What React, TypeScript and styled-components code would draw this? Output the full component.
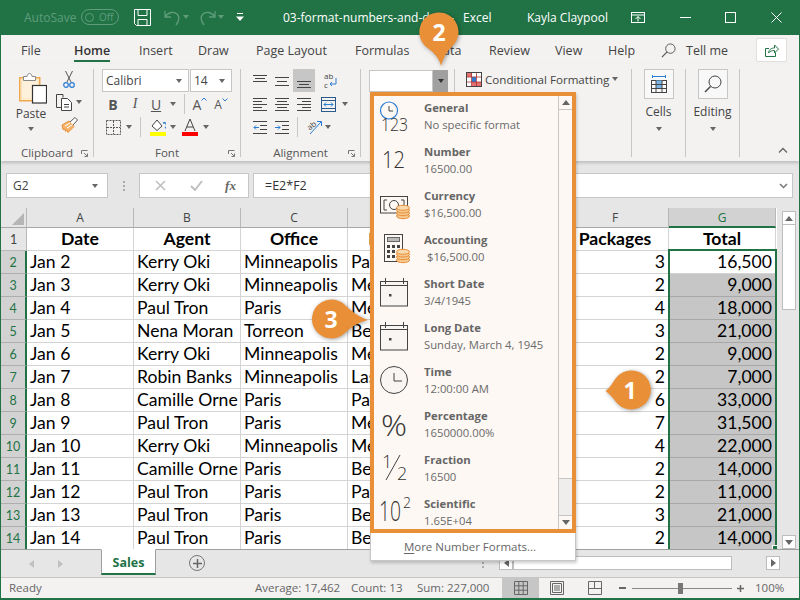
import React from "react";
import styled, { createGlobalStyle } from "styled-components";

const Global = createGlobalStyle`
  html, body { margin: 0; padding: 0; width: 800px; height: 600px; overflow: hidden; background: #e6e6e6; }
  * { box-sizing: border-box; }
`;
const UI = `"Open Sans", "Noto Sans", sans-serif`;
const GREEN = "#217346";
const ORANGE = "#e98f38";

const Frame = styled.div`
  position: relative; width: 800px; height: 600px; overflow: hidden;
  display: flex; flex-direction: column; background: #e6e6e6;
  border-left: 1px solid ${GREEN}; border-right: 1px solid ${GREEN}; border-bottom: 2px solid ${GREEN};
  font-family: ${UI}; color: #444;
  & > * { min-height: 0; }
`;
const Slot = styled.div<{ $w?: number; $ml?: number; $j?: string; $h?: number }>`
  flex: 0 0 ${p => (p.$w !== undefined ? `${p.$w}px` : "auto")};
  margin-left: ${p => p.$ml ?? 0}px;
  ${p => (p.$h ? `height: ${p.$h}px;` : "")}
  display: flex; align-items: center; justify-content: ${p => p.$j ?? "center"};
  white-space: nowrap;
`;
const Caret = styled.span<{ $c?: string }>`
  display: block; width: 0; height: 0;
  border-left: 3.5px solid transparent; border-right: 3.5px solid transparent;
  border-top: 4px solid ${p => p.$c ?? "#666"};
`;
const Sep = styled.div<{ $ml: number }>`
  flex: 0 0 1px; margin-left: ${p => p.$ml}px; height: 20px; background: #c8c6c4;
`;

/* title bar */
const TitleBar = styled.div`
  flex: 0 0 35px; display: flex; align-items: center; background: ${GREEN};
  color: #fff; font-size: 12px; padding-bottom: 1px;
`;
const DimText = styled.span`color: #5f9c7c; font-size: 12px;`;
const Toggle = styled.div`
  width: 38px; height: 16px; border: 1.5px solid #5f9c7c; border-radius: 8px;
  display: flex; align-items: center; gap: 5px; padding-left: 3px; color: #5f9c7c; font-size: 10px;
`;
const Knob = styled.span`width: 9px; height: 9px; border-radius: 50%; border: 1.5px solid #5f9c7c;`;

/* tabs */
const TabRow = styled.div`
  flex: 0 0 29px; display: flex; align-items: flex-start; background: #f3f2f1; padding-top: 5px; font-size: 12.5px; color: #444;
`;
const TabLabel = styled.span<{ $active?: boolean }>`
  display: block; height: 22px; line-height: 21px;
  color: ${p => (p.$active ? "#333" : "#444")};
  font-weight: ${p => (p.$active ? 600 : 400)};
  border-bottom: ${p => (p.$active ? `2px solid ${GREEN}` : "none")};
`;
const ShareBtn = styled.div`
  flex: 0 0 31px; height: 24px; margin-top: -2px; background: #fff; border: 1px solid #e1dfdd; border-radius: 2px;
  display: flex; align-items: center; justify-content: center;
`;

/* ribbon */
const Ribbon = styled.div`
  flex: 0 0 97px; display: flex; align-items: flex-start; background: #f3f2f1; font-size: 11.6px;
  box-shadow: 0 2px 3px rgba(0,0,0,.18); position: relative; z-index: 1;
`;
const Group = styled.div<{ $w: number }>`
  flex: 0 0 ${p => p.$w}px; height: 88px; margin-top: 5px; border-right: 1px solid #c8c6c4;
  display: flex; flex-direction: column;
`;
const GroupBody = styled.div`flex: 1; display: flex; flex-direction: column; min-height: 0;`;
const GroupColumns = styled.div`flex: 1; display: flex; min-height: 0;`;
const GroupLabel = styled.div`
  flex: 0 0 10px; min-height: 0; height: 10px; position: relative; text-align: center; font-size: 11.5px; line-height: 12px; color: #555;
`;
const Launcher = styled.svg`position: absolute; right: 5px; top: 3px;`;
const Row = styled.div<{ $h?: number; $mt?: number }>`
  display: flex; align-items: center; height: ${p => p.$h ?? 20}px; margin-top: ${p => p.$mt ?? 0}px;
`;
const Stack = styled.div<{ $w: number; $ml?: number }>`
  flex: 0 0 ${p => p.$w}px; margin-left: ${p => p.$ml ?? 0}px;
  display: flex; flex-direction: column; align-items: center;
`;
const Combo = styled.div<{ $w: number; $ml?: number }>`
  flex: 0 0 ${p => p.$w}px; margin-left: ${p => p.$ml ?? 0}px; height: 23px; background: #fff; border: 1px solid #c8c6c4;
  display: flex; align-items: center; justify-content: space-between; padding: 0 6px 0 3px;
  font-size: 12px; color: #444;
`;
const FontLetter = styled.span<{ $i?: boolean; $u?: boolean; $b?: boolean; $s?: number }>`
  font-size: ${p => p.$s ?? 14}px; color: #555;
  font-family: ${p => (p.$i ? `"Liberation Serif", serif` : UI)};
  font-weight: ${p => (p.$b ? 700 : 400)}; font-style: ${p => (p.$i ? "italic" : "normal")};
  text-decoration: ${p => (p.$u ? "underline" : "none")};
`;
const Superscript = styled.svg`margin-bottom: 8px;`;
const Highlight = styled.div`
  flex: 0 0 22px; margin-left: 4px; height: 23px; background: #c6c6c6;
  display: flex; align-items: center; justify-content: center;
`;
const NumberBox = styled.div`
  flex: 0 0 64px; margin-left: 8px; height: 22px; background: #fff; border: 1px solid #c8c6c4;
`;
const NumberDrop = styled.div`
  flex: 0 0 15px; height: 22px; background: #a0a0a0; display: flex; align-items: center; justify-content: center;
`;
const BigBtn = styled.div`
  width: 30px; height: 30px; background: #f8f8f8; border: 1px solid #c8c6c4;
  display: flex; align-items: center; justify-content: center;
`;
const BigLabel = styled.div`margin: 5px 0 8px; font-size: 12px; line-height: 15px; color: #444;`;
const PasteLabel = styled(BigLabel)`margin: 2px 0 6px;`;
const PasteIcon = styled.svg`margin: 3px 0 0 3px;`;
const CollapseBox = styled.div`flex: 1; height: 92px; display: flex; align-items: flex-end; justify-content: flex-end; padding: 0 11px 3px 0;`;

/* formula bar */
const FormulaZone = styled.div`
  flex: 0 0 47px; display: flex; align-items: flex-start; padding: 12px 6px 0 5px; background: #e6e6e6;
`;
const NameBox = styled.div`
  flex: 0 0 102px; height: 25px; background: #fff; border: 1px solid #c6c6c6;
  display: flex; align-items: center; justify-content: space-between; padding: 0 9px 0 6px; font-size: 12px; color: #444;
`;
const Dots = styled.div`
  flex: 0 0 31px; height: 25px; display: flex; flex-direction: column; align-items: center; justify-content: center; gap: 2px;
  & > i { display: block; width: 2px; height: 2px; background: #aaa; }
`;
const FxBox = styled.div`
  flex: 0 0 110px; height: 25px; background: #fff; border: 1px solid #c6c6c6; display: flex; align-items: center;
`;
const FxLabel = styled.span`font-family: "Liberation Serif", serif; font-style: italic; font-size: 13px; color: #666; font-weight: 700;`;
const FormulaInput = styled.div`
  flex: 1; margin-left: 4px; height: 25px; background: #fff; border: 1px solid #c6c6c6;
  display: flex; align-items: center; justify-content: space-between; padding: 0 4px 0 11px; font-size: 12.5px; color: #333;
`;

/* sheet */
const SheetArea = styled.div`flex: 0 0 341px; display: flex; align-items: stretch; background: #e6e6e6; min-height: 0;`;
const SheetClip = styled.div`position: relative; flex: 0 0 776px; overflow: hidden; background: #fff; min-height: 0;`;
const Grid = styled.div`
  display: grid; grid-template-columns: 26px repeat(7, 107px); grid-template-rows: 20px repeat(14, 23px);
`;
const Corner = styled.div`
  background: #e6e6e6; border-right: 1px solid #b8b8b8; border-bottom: 1px solid #a8a8a8; position: relative;
  &::after { content: ""; position: absolute; right: 2px; bottom: 2px; border-style: solid; border-width: 0 0 12px 12px; border-color: transparent transparent #b5b5b5 transparent; }
`;
const ColHead = styled.div<{ $sel?: boolean }>`
  background: ${p => (p.$sel ? "#d2d2d2" : "#e6e6e6")};
  border-right: 1px solid #b8b8b8;
  border-bottom: ${p => (p.$sel ? `2px solid ${GREEN}` : "1px solid #a8a8a8")};
  display: flex; align-items: center; justify-content: center; font-size: 12px;
  color: ${p => (p.$sel ? GREEN : "#444")};
`;
const RowHead = styled.div<{ $sel?: boolean }>`
  background: ${p => (p.$sel ? "#d2d2d2" : "#e6e6e6")};
  border-bottom: 1px solid ${p => (p.$sel ? "#aeaeae" : "#b8b8b8")};
  border-right: ${p => (p.$sel ? `2px solid ${GREEN}` : "1px solid #b8b8b8")};
  display: flex; align-items: center; justify-content: center; padding-top: 1px;
  font-family: Lato, sans-serif; font-size: 12.5px; color: ${p => (p.$sel ? GREEN : "#444")};
`;
const Cell = styled.div<{ $a?: string; $b?: boolean; $sel?: boolean }>`
  background: ${p => (p.$sel ? "#c6c6c6" : "#fff")};
  border-right: 1px solid ${p => (p.$sel ? "#a8a8a8" : "#d4d4d4")};
  border-bottom: 1px solid ${p => (p.$sel ? "#a8a8a8" : "#d4d4d4")};
  font-family: Lato, Carlito, sans-serif; font-size: 17.6px; line-height: 22px; color: #000;
  font-weight: ${p => (p.$b ? 700 : 400)};
  text-align: ${p => p.$a ?? "left"};
  padding: 0 3px; overflow: hidden; white-space: nowrap;
`;
const Selection = styled.div`
  position: absolute; left: 667px; top: 41px; width: 109px; height: 310px; border: 2px solid ${GREEN}; pointer-events: none;
`;
const FillHandle = styled.div`
  position: absolute; left: 771px; top: 337px; width: 6px; height: 6px; background: ${GREEN}; border: 1px solid #fff;
`;
const VScroll = styled.div`
  flex: 1; display: flex; flex-direction: column; padding: 3px 3px 0 5px; min-height: 0;
`;
const ScrollBtn = styled.div<{ $w?: number; $h?: number; $ml?: number; $mt?: number }>`
  flex: 0 0 auto; width: ${p => p.$w ?? 14}px; height: ${p => p.$h ?? 14}px; margin-left: ${p => p.$ml ?? 0}px;
  margin-top: ${p => p.$mt ?? 0}px;
  background: #fff; border: 1px solid #bdbdbd;
  display: flex; align-items: center; justify-content: center;
`;
const VThumb = styled.div`flex: 0 0 85px; background: #fff; border: 1px solid #bdbdbd; border-top: 0;`;
const VTrack = styled.div`flex: 1;`;
const CaretUp = styled.span`
  display: block; width: 0; height: 0; border-left: 4px solid transparent; border-right: 4px solid transparent; border-bottom: 5px solid #666;
`;
const CaretDown = styled.span`
  display: block; width: 0; height: 0; border-left: 4px solid transparent; border-right: 4px solid transparent; border-top: 5px solid #666;
`;
const CaretSide = styled.span<{ $left?: boolean; $c?: string }>`
  display: block; width: 0; height: 0; border-top: 4px solid transparent; border-bottom: 4px solid transparent;
  ${p => (p.$left ? `border-right: 5px solid ${p.$c ?? "#666"};` : `border-left: 5px solid ${p.$c ?? "#666"};`)}
`;

/* sheet tabs */
const SheetBar = styled.div`
  flex: 0 0 29px; display: flex; align-items: flex-start; background: #e6e6e6; border-bottom: 1px solid #c8c6c4; border-top: 1px solid #9f9f9f;
`;
const SheetTab = styled.div`
  flex: 0 0 55px; height: 26px; margin-top: -1px; margin-left: 36px; padding-top: 2px; background: #fff; border: 1px solid #9f9f9f; border-top: 1px solid #fff;
  border-bottom: 2px solid ${GREEN}; color: ${GREEN}; font-weight: 700; font-size: 12.5px;
  display: flex; align-items: center; justify-content: center;
`;
const AddSheet = styled.div`
  flex: 0 0 16px; height: 16px; margin: 5px 0 0 33px; border-radius: 50%; border: 1.5px solid #777;
  display: flex; align-items: center; justify-content: center;
`;
const SplitDots = styled(Dots)`flex: 0 0 4px; height: 14px; margin: 6px 0 0 276px;`;
const HThumb = styled.div`flex: 0 0 219px; height: 14px; margin-top: 6px; background: #fff; border: 1px solid #bdbdbd;`;

/* status bar */
const StatusBar = styled.div`
  flex: 1; display: flex; align-items: center; background: #f3f2f1; font-size: 11.5px; color: #666;
`;
const StatusText = styled(Slot)`padding-bottom: 2px;`;
const ActiveView = styled.div`
  flex: 0 0 37px; height: 20px; background: #c6c6c6; display: flex; align-items: center; justify-content: center;
`;
const ZoomTrack = styled.div`
  flex: 0 0 100px; margin-left: 6px; height: 1px; background: #888; position: relative;
`;
const ZoomThumb = styled.div`
  position: absolute; left: 46px; top: -5px; width: 5px; height: 11px; background: #777;
`;

/* number format menu */
const Menu = styled.div`
  position: absolute; left: 369px; top: 92px; width: 206px; z-index: 3;
  box-shadow: 1px 2px 3px rgba(0,0,0,.2);
`;
const MenuBody = styled.div`
  height: 441px; border: 4px solid ${ORANGE}; background: #fdf8f4; display: flex;
`;
const MenuList = styled.div`flex: 1; min-width: 0;`;
const MenuItem = styled.div`flex: none; height: 44px; display: flex;`;
const MenuIcon = styled.svg`flex: 0 0 50px; width: 50px; height: 44px;`;
const MenuText = styled.div`padding-top: 3px; font-size: 11.3px; line-height: 17px; color: #6a6a6a; white-space: pre;`;
const MenuTitle = styled.div`font-weight: 700; color: #666;`;
const MenuScroll = styled.div`flex: 0 0 14px; display: flex; flex-direction: column; border-left: 1px solid #c8c6c4;`;
const MenuBtn = styled.div`
  flex: 0 0 14px; background: #fdf8f4; display: flex; align-items: center; justify-content: center;
  border-bottom: 1px solid #c8c6c4;
`;
const MenuBtnEnd = styled(MenuBtn)`border-bottom: 0; border-top: 1px solid #c8c6c4;`;
const MenuThumb = styled.div`flex: 0 0 369px; border-bottom: 1px solid #c8c6c4;`;
const MenuTrack = styled.div`flex: 1; background: #f0eeec;`;
const MoreRow = styled.div`
  height: 28px; background: #fff; border: 1px solid #c8c6c4; border-top: 0; display: flex; align-items: center;
  justify-content: center; padding-right: 6px; font-size: 11.5px; color: #666;
  & u { text-underline-offset: 2px; }
`;

/* callouts */
const Callout = styled.div<{ $x: number; $y: number; $w: number; $h: number }>`
  position: absolute; left: ${p => p.$x}px; top: ${p => p.$y}px; width: ${p => p.$w}px; height: ${p => p.$h}px; z-index: 4;
`;
const CalloutShape = styled.svg`display: block; overflow: visible; filter: drop-shadow(1px 1px 2px rgba(0,0,0,.35));`;
const CalloutNum = styled.span<{ $left: number }>`
  position: absolute; left: ${p => p.$left}px; top: 0; width: 40px; height: 40px; display: flex; align-items: center; justify-content: center;
  color: #fff; font: 700 23px/1 ${UI};
`;

/* drawings */
const Lines: React.FC<{ w: number; rows: [number, number, number][]; c?: string }> = ({ w, rows, c = "#444" }) => (
  <svg width={w} height={16} viewBox={`0 0 ${w} 16`}>
    {rows.map(([x1, x2, y], i) => <path key={i} d={`M${x1} ${y + .5}H${x2}`} stroke={c} fill="none" />)}
  </svg>
);
const alignTop: [number, number, number][] = [[0, 14, 2], [2, 12, 5], [0, 14, 8]];
const alignMid: [number, number, number][] = [[0, 14, 4], [2, 12, 8], [0, 14, 12]];
const alignBot: [number, number, number][] = [[0, 14, 8], [2, 12, 11], [0, 14, 14]];
const left: [number, number, number][] = [[0, 14, 2], [0, 9, 5], [0, 14, 8], [0, 9, 11], [0, 14, 14]];
const center: [number, number, number][] = [[0, 14, 2], [2, 12, 5], [0, 14, 8], [2, 12, 11], [0, 14, 14]];
const right: [number, number, number][] = [[0, 14, 2], [5, 14, 5], [0, 14, 8], [5, 14, 11], [0, 14, 14]];

const Launch = () => (
  <Launcher width="7" height="7" viewBox="0 0 7 7">
    <path d="M.5 4V.5H6.500M3 3l3 3M6.500 3.500V6.500H3.500" stroke="#777" fill="none" />
  </Launcher>
);
const Coins: React.FC<{ x: number; y: number }> = ({ x, y }) => (
  <g transform={`translate(${x} ${y})`} fill="#f5c88f" stroke="#e98f38">
    <ellipse cx="7" cy="11" rx="6.500" ry="2.700" />
    <ellipse cx="7" cy="8" rx="6.500" ry="2.700" />
    <ellipse cx="7" cy="5.300" rx="6.500" ry="2.700" />
    <ellipse cx="7" cy="2.800" rx="6.500" ry="2.500" fill="#f9d9ae" />
  </g>
);
const Calendar = () => (
  <g fill="none" stroke="#444">
    <rect x="6.500" y="9.500" width="27" height="24.500" fill="#f8f5f2" />
    <path d="M6.500 13.500H33.500M11.500 6v6M29.500 6v6" />
    <rect x="15.500" y="22.500" width="1.500" height="1.500" fill="#444" />
  </g>
);
const iconText = { fontFamily: `"Open Sans", sans-serif`, fontWeight: 300, fill: "#333", lengthAdjust: "spacingAndGlyphs" } as const;

const icons: React.ReactNode[] = [
  <>
    <circle cx="15" cy="14.500" r="8.500" fill="none" stroke="#2b7cd3" strokeWidth="1.200" />
    <path d="M15 10v5h4" fill="none" stroke="#444" />
    <text x="7" y="34.500" fontSize="18" textLength="27" {...iconText}>123</text>
  </>,
  <text x="8" y="28" fontSize="24" textLength="23" {...iconText}>12</text>,
  <>
    <rect x="6.500" y="12.500" width="27" height="16.500" fill="none" stroke="#444" />
    <path d="M13 16h-3v10h3M27 16h3v10h-3" fill="none" stroke="#444" />
    <circle cx="20" cy="21" r="4.500" fill="none" stroke="#444" />
    <Coins x={22} y={21} />
  </>,
  <>
    <rect x="10.500" y="6.500" width="18" height="27" fill="none" stroke="#444" />
    <rect x="13.500" y="9.500" width="12" height="4" fill="#bbb" stroke="#666" />
    <path d="M13 17h3v3h-3zM18 17h3v3h-3zM23 17h3v3h-3zM13 22h3v3h-3zM18 22h3v3h-3zM13 27h3v3h-3zM18 27h3v3h-3z" fill="#444" />
    <Coins x={22} y={21} />
  </>,
  <Calendar />,
  <Calendar />,
  <>
    <circle cx="20" cy="20" r="13.500" fill="#f8f5f2" stroke="#444" />
    <path d="M20 13v8h8" fill="none" stroke="#444" />
  </>,
  <text x="7" y="32" fontSize="30" textLength="26" {...iconText}>%</text>,
  <>
    <text x="8" y="20" fontSize="18" {...iconText}>1</text>
    <path d="M12 32 L26 7" stroke="#444" fill="none" />
    <text x="23" y="32" fontSize="18" {...iconText}>2</text>
  </>,
  <>
    <text x="5" y="29" fontSize="27" textLength="22" {...iconText}>10</text>
    <text x="29" y="16" fontSize="14" {...iconText}>2</text>
  </>,
];

const menuItems: [string, string][] = [
  ["General", "No specific format"],
  ["Number", "16500.00"],
  ["Currency", "$16,500.00"],
  ["Accounting", " $16,500.00"],
  ["Short Date", "3/4/1945"],
  ["Long Date", "Sunday, March 4, 1945"],
  ["Time", "12:00:00 AM"],
  ["Percentage", "1650000.00%"],
  ["Fraction", "16500"],
  ["Scientific", "1.65E+04"],
];

const heads = ["A", "B", "C", "D", "E", "F", "G"];
const titles = ["Date", "Agent", "Office", "Expense", "", "Packages", "Total"];
const data: [string, string, string, string, string, string][] = [
  ["Jan 2", "Kerry Oki", "Minneapolis", "Pa", "3", "16,500"],
  ["Jan 3", "Kerry Oki", "Minneapolis", "Me", "2", "9,000"],
  ["Jan 4", "Paul Tron", "Paris", "Me", "4", "18,000"],
  ["Jan 5", "Nena Moran", "Torreon", "Be", "3", "21,000"],
  ["Jan 6", "Kerry Oki", "Minneapolis", "Me", "2", "9,000"],
  ["Jan 7", "Robin Banks", "Minneapolis", "Las", "2", "7,000"],
  ["Jan 8", "Camille Orne", "Paris", "Pa", "6", "33,000"],
  ["Jan 9", "Paul Tron", "Paris", "Me", "7", "31,500"],
  ["Jan 10", "Kerry Oki", "Minneapolis", "Me", "4", "22,000"],
  ["Jan 11", "Camille Orne", "Paris", "Be", "2", "14,000"],
  ["Jan 12", "Paul Tron", "Paris", "Pa", "2", "11,000"],
  ["Jan 13", "Paul Tron", "Paris", "Be", "3", "21,000"],
  ["Jan 14", "Paul Tron", "Paris", "Be", "2", "14,000"],
];

export default function App() {
  return (
    <Frame>
      <Global />
      <TitleBar>
        <Slot $w={57} $ml={23} $j="flex-start"><DimText>AutoSave</DimText></Slot>
        <Slot $w={38}><Toggle><Knob />Off</Toggle></Slot>
        <Slot $w={17} $ml={15}>
          <svg width="17" height="17" viewBox="0 0 17 17" fill="none" stroke="#fff">
            <path d="M.5.500H16.500V16.500H2.500L.5 14.500Z" /><path d="M4 .5V6.500H13V.5M4 16.500V10.500H13V16.500" />
          </svg>
        </Slot>
        <Slot $w={17} $ml={13}>
          <svg width="17" height="17" viewBox="0 0 17 17" fill="none" stroke="#5f9c7c" strokeWidth="1.300">
            <path d="M1 2v6h6M1 8C4 3 10 2 13 5c3 3 2 7-1 11" />
          </svg>
        </Slot>
        <Slot $w={10}><Caret $c="#5f9c7c" /></Slot>
        <Slot $w={17} $ml={8}>
          <svg width="17" height="17" viewBox="0 0 17 17" fill="none" stroke="#5f9c7c" strokeWidth="1.300">
            <path d="M16 2v6h-6M16 8C13 3 7 2 4 5c-3 3-2 7 1 11" />
          </svg>
        </Slot>
        <Slot $w={10}><Caret $c="#5f9c7c" /></Slot>
        <Slot $w={12} $ml={8}>
          <svg width="8" height="9" viewBox="0 0 8 9"><path d="M1 .5H7" stroke="#fff" /><path d="M0 3.500H8L4 8Z" fill="#fff" /></svg>
        </Slot>
        <Slot $w={180} $ml={37} $j="flex-start">03-format-numbers-and-data -</Slot>
        <Slot $w={64} $j="flex-start">Excel</Slot>
        <Slot $w={104} $j="flex-start">Kayla Claypool</Slot>
        <Slot $w={14}>
          <svg width="14" height="11" viewBox="0 0 14 11" fill="none" stroke="#fff">
            <rect x=".5" y=".5" width="13" height="10" /><path d="M.5 3H13.500M7 9.500V4.500M4.500 7L7 4.500L9.500 7" />
          </svg>
        </Slot>
        <Slot $w={12} $ml={34}><svg width="11" height="1"><path d="M0 .5H11" stroke="#fff" /></svg></Slot>
        <Slot $w={12} $ml={33}><svg width="11" height="11" fill="none" stroke="#fff"><rect x=".5" y=".5" width="10" height="10" /></svg></Slot>
        <Slot $w={12} $ml={34}><svg width="11" height="11" fill="none" stroke="#fff"><path d="M.5.500L10.500 10.500M10.500.5L.5 10.500" /></svg></Slot>
      </TitleBar>

      <TabRow>
        <Slot $w={53} $ml={20} $j="flex-start"><TabLabel>File</TabLabel></Slot>
        <Slot $w={65} $j="flex-start"><TabLabel $active>Home</TabLabel></Slot>
        <Slot $w={59} $j="flex-start"><TabLabel>Insert</TabLabel></Slot>
        <Slot $w={58} $j="flex-start"><TabLabel>Draw</TabLabel></Slot>
        <Slot $w={99} $j="flex-start"><TabLabel>Page Layout</TabLabel></Slot>
        <Slot $w={79} $j="flex-start"><TabLabel>Formulas</TabLabel></Slot>
        <Slot $w={55} $j="flex-start"><TabLabel>Data</TabLabel></Slot>
        <Slot $w={66} $j="flex-start"><TabLabel>Review</TabLabel></Slot>
        <Slot $w={53} $j="flex-start"><TabLabel>View</TabLabel></Slot>
        <Slot $w={53} $j="flex-start"><TabLabel>Help</TabLabel></Slot>
        <Slot $w={25} $j="flex-start" $h={20}>
          <svg width="15" height="15" viewBox="0 0 16 16" fill="none" stroke="#555">
            <circle cx="10" cy="6" r="5" /><path d="M6.500 9.500L1 15" strokeWidth="1.300" />
          </svg>
        </Slot>
        <Slot $w={70} $j="flex-start"><TabLabel>Tell me</TabLabel></Slot>
        <ShareBtn>
          <svg width="14" height="14" viewBox="0 0 14 14" fill="none" stroke={GREEN}>
            <path d="M4 5.500H.5V13.500H10.500V9.500" /><path d="M3.500 10C4 6 7 5 9.500 5V2L13.500 6L9.500 10V7.500C7 7.500 5 8 3.500 10Z" />
          </svg>
        </ShareBtn>
      </TabRow>

      <Ribbon>
        <Group $w={93}>
          <GroupColumns>
            <Stack $w={38} $ml={11}>
              <PasteIcon width="28" height="32" viewBox="0 0 28 32">
                <rect x=".75" y="5.750" width="20" height="23" fill="#fff8e8" stroke="#f0a84f" strokeWidth="1.500" />
                <rect x="2.500" y="7.500" width="16.500" height="19.500" fill="#fdf1dc" stroke="#fde2b5" />
                <path d="M4.500 8.500V4.500H8C8.500 .5 12.500 .5 13 4.500H16.500V8.500Z" fill="#fff" stroke="#888" />
                <rect x="13.500" y="13.500" width="14" height="17.500" fill="#fff" stroke="#333" strokeWidth="1.200" />
              </PasteIcon>
              <PasteLabel>Paste</PasteLabel>
              <Caret />
            </Stack>
            <Stack $w={30} $ml={4}>
              <Slot $w={20} $h={21}>
                <svg width="12" height="17" viewBox="0 0 12 17" fill="none">
                  <path d="M2.500 0L8 11M9.500 0L4 11" stroke="#555" /><circle cx="3" cy="14" r="2.300" stroke="#2b7cd3" strokeWidth="1.200" /><circle cx="9" cy="14" r="2.300" stroke="#2b7cd3" strokeWidth="1.200" />
                </svg>
              </Slot>
              <Row $h={26}>
                <Slot $w={18}>
                  <svg width="16" height="17" viewBox="0 0 16 17" fill="none" stroke="#444">
                    <path d="M7 3.500V.5H.5V13.500H5" /><path d="M5.500 4.500H11.500L15.500 8.500V16.500H5.500Z" fill="#fff" /><path d="M8 10.500H13M8 13H13" />
                  </svg>
                </Slot>
                <Slot $w={8} $ml={2}><Caret /></Slot>
              </Row>
              <Slot $w={20} $h={20}>
                <svg width="17" height="16" viewBox="0 0 17 16">
                  <path d="M1 8L8 4L13 9.500L7 15.500L6 13L4.500 14.500L4 12L2 12.500Z" fill="#f5b46e" stroke="#e98f38" />
                  <path d="M4 9L9 6M6 11L11 8" stroke="#fff" fill="none" />
                  <path d="M9 5L14 .5L16.500 3L12 8" fill="#fff" stroke="#555" />
                </svg>
              </Slot>
            </Stack>
          </GroupColumns>
          <GroupLabel>Clipboard<Launch /></GroupLabel>
        </Group>

        <Group $w={147}>
          <GroupBody>
            <Row $h={23}>
              <Combo $w={87} $ml={8}>Calibri<Caret /></Combo>
              <Combo $w={42} $ml={1}>14<Caret /></Combo>
            </Row>
            <Row $mt={2}>
              <Slot $w={16} $ml={11}><FontLetter $b>B</FontLetter></Slot>
              <Slot $w={16} $ml={6}><FontLetter $i>I</FontLetter></Slot>
              <Slot $w={16} $ml={5}><FontLetter $u>U</FontLetter></Slot>
              <Slot $w={8} $ml={5}><Caret /></Slot>
              <Sep $ml={7} />
              <Slot $w={18} $ml={6}>
                <FontLetter>A</FontLetter>
                <Superscript width="6" height="6"><path d="M.5 3.500L3 1L5.500 3.500" fill="none" stroke="#2b7cd3" /></Superscript>
              </Slot>
              <Slot $w={18} $ml={3}>
                <FontLetter $s={12}>A</FontLetter>
                <Superscript width="6" height="6"><path d="M.5 1.500L3 4L5.500 1.500" fill="none" stroke="#2b7cd3" /></Superscript>
              </Slot>
            </Row>
            <Row $mt={3}>
              <Slot $w={16} $ml={11}>
                <svg width="15" height="15" fill="none" stroke="#555" strokeDasharray="2 1"><rect x=".5" y=".5" width="14" height="14" /><path d="M7.500 1V14M1 7.500H14" /></svg>
              </Slot>
              <Slot $w={8} $ml={4}><Caret /></Slot>
              <Sep $ml={7} />
              <Slot $w={16} $ml={9}>
                <svg width="16" height="18" viewBox="0 0 16 18">
                  <path d="M2 8L7 2L12 8L7 12.500Z" fill="#fff" stroke="#444" /><path d="M13 5a2 2 0 0 1 2 5" fill="none" stroke="#2b7cd3" strokeWidth="1.500" />
                  <rect x="0" y="14" width="16" height="4" fill="#ffff00" />
                </svg>
              </Slot>
              <Slot $w={8} $ml={3}><Caret /></Slot>
              <Slot $w={16} $ml={5}>
                <svg width="16" height="18" viewBox="0 0 16 18">
                  <path d="M3 13L8 1L13 13M5 9H11" fill="none" stroke="#444" />
                  <rect x="0" y="14" width="16" height="4" fill="#ff0000" />
                </svg>
              </Slot>
              <Slot $w={8} $ml={4}><Caret /></Slot>
            </Row>
          </GroupBody>
          <GroupLabel>Font<Launch /></GroupLabel>
        </Group>

        <Group $w={120}>
          <GroupBody>
            <Row $h={23}>
              <Slot $w={14} $ml={12}><Lines w={14} rows={alignTop} /></Slot>
              <Slot $w={14} $ml={8}><Lines w={14} rows={alignMid} /></Slot>
              <Highlight><Lines w={14} rows={alignBot} /></Highlight>
              <Slot $w={14} $ml={8}>
                <svg width="15" height="18" viewBox="0 0 15 18">
                  <text x="1" y="7" fontSize="8" fill="#444" fontFamily="Open Sans">ab</text>
                  <text x="1" y="16" fontSize="8" fill="#444" fontFamily="Open Sans">c</text>
                  <path d="M13 6V12H7M9 10L7 12L9 14" fill="none" stroke="#2b7cd3" />
                </svg>
              </Slot>
            </Row>
            <Row $mt={2}>
              <Slot $w={14} $ml={12}><Lines w={14} rows={left} /></Slot>
              <Slot $w={14} $ml={8}><Lines w={14} rows={center} /></Slot>
              <Slot $w={14} $ml={8}><Lines w={14} rows={right} /></Slot>
              <Slot $w={15} $ml={10}>
                <svg width="15" height="15" viewBox="0 0 15 15" fill="none">
                  <rect x=".5" y=".5" width="14" height="14" stroke="#2b5a8c" />
                  <path d="M.5 3.500H14.500M.5 11.500H14.500" stroke="#2b5a8c" />
                  <path d="M3 7.500H12M5 5.500L3 7.500L5 9.500M10 5.500L12 7.500L10 9.500" stroke="#2b7cd3" />
                </svg>
              </Slot>
              <Slot $w={8} $ml={5}><Caret /></Slot>
            </Row>
            <Row $mt={3}>
              <Slot $w={14} $ml={12}>
                <svg width="14" height="16" viewBox="0 0 14 16" fill="none">
                  <path d="M0 2.500H14M7 6.500H14M7 10.500H14M0 14.500H14" stroke="#444" /><path d="M6 8.500H1M3 6.500L1 8.500L3 10.500" stroke="#2b7cd3" />
                </svg>
              </Slot>
              <Slot $w={14} $ml={8}>
                <svg width="14" height="16" viewBox="0 0 14 16" fill="none">
                  <path d="M0 2.500H14M7 6.500H14M7 10.500H14M0 14.500H14" stroke="#444" /><path d="M0 8.500H5M3 6.500L5 8.500L3 10.500" stroke="#2b7cd3" />
                </svg>
              </Slot>
              <Sep $ml={8} />
              <Slot $w={17} $ml={7}>
                <svg width="18" height="18" viewBox="0 0 18 18">
                  <text x="2" y="11" fontSize="8" fill="#444" fontFamily="Open Sans" transform="rotate(-40 6 8)">ab</text>
                  <path d="M5 16L16 4M12 3.500H16.500V8" fill="none" stroke="#2b7cd3" />
                </svg>
              </Slot>
              <Slot $w={8} $ml={1}><Caret /></Slot>
            </Row>
          </GroupBody>
          <GroupLabel>Alignment<Launch /></GroupLabel>
        </Group>

        <Group $w={94}>
          <Row $h={23}>
            <NumberBox />
            <NumberDrop><Caret $c="#333" /></NumberDrop>
          </Row>
        </Group>

        <Group $w={177}>
          <Row $h={20}>
            <Slot $w={16} $ml={11}>
              <svg width="16" height="15" viewBox="0 0 16 15" fill="none">
                <rect x=".5" y=".5" width="15" height="14" fill="#fff" stroke="#444" />
                <rect x="1" y="1" width="5" height="4" fill="#e46f6f" /><rect x="6" y="5" width="4" height="5" fill="#2b7cd3" /><rect x="6" y="10" width="9" height="4" fill="#e46f6f" />
                <path d="M5.500 1V14M10.500 1V14M1 5H15M1 10H15" stroke="#a33" strokeWidth=".8" />
              </svg>
            </Slot>
            <Slot $ml={3}>Conditional Formatting</Slot>
            <Slot $w={7} $ml={2}><Caret /></Slot>
          </Row>
        </Group>

        <Group $w={54}>
          <Stack $w={53}>
            <BigBtn>
              <svg width="18" height="18" viewBox="0 0 18 18" fill="none">
                <path d="M2.500 1.500H15.500M2.500 0V3M15.500 0V3" stroke="#2b7cd3" />
                <rect x="1.500" y="5.500" width="15" height="12" stroke="#444" />
                <rect x="6" y="5.500" width="6" height="8" fill="#7cb5e8" />
                <path d="M6 6V17M12 6V17M2 9.500H16M2 13.500H16" stroke="#444" />
              </svg>
            </BigBtn>
            <BigLabel>Cells</BigLabel>
            <Caret />
          </Stack>
        </Group>

        <Group $w={54}>
          <Stack $w={53}>
            <BigBtn>
              <svg width="18" height="18" viewBox="0 0 18 18" fill="none" stroke="#444">
                <circle cx="11" cy="7" r="6" /><path d="M6.500 11.500L1 17" strokeWidth="1.400" />
              </svg>
            </BigBtn>
            <BigLabel>Editing</BigLabel>
            <Caret />
          </Stack>
        </Group>

        <CollapseBox>
          <svg width="10" height="6" fill="none" stroke="#666" strokeWidth="1.300"><path d="M1 5.500L5 1.500L9 5.500" /></svg>
        </CollapseBox>
      </Ribbon>

      <FormulaZone>
        <NameBox>G2<Caret /></NameBox>
        <Dots><i /><i /><i /></Dots>
        <FxBox>
          <Slot $w={17} $ml={12}>
            <svg width="11" height="11" fill="none" stroke="#c0c0c0" strokeWidth="1.600"><path d="M1 1L10 10M10 1L1 10" /></svg>
          </Slot>
          <Slot $w={17} $ml={19}>
            <svg width="13" height="11" fill="none" stroke="#c0c0c0" strokeWidth="2"><path d="M1 6L5 10L12 1" /></svg>
          </Slot>
          <Slot $w={17} $ml={17}><FxLabel>fx</FxLabel></Slot>
        </FxBox>
        <FormulaInput>
          =E2*F2
          <svg width="9" height="6" fill="none" stroke="#777" strokeWidth="1.500"><path d="M1 1L4.500 4.500L8 1" /></svg>
        </FormulaInput>
      </FormulaZone>

      <SheetArea>
        <SheetClip>
          <Grid>
            <Corner />
            {heads.map(h => <ColHead key={h} $sel={h === "G"}>{h}</ColHead>)}
            <RowHead>1</RowHead>
            {titles.map((t, i) => <Cell key={i} $a="center" $b>{t}</Cell>)}
            {data.map((r, i) => (
              <React.Fragment key={i}>
                <RowHead $sel>{i + 2}</RowHead>
                <Cell>{r[0]}</Cell>
                <Cell>{r[1]}</Cell>
                <Cell>{r[2]}</Cell>
                <Cell>{r[3]}</Cell>
                <Cell />
                <Cell $a="right">{r[4]}</Cell>
                <Cell $a="right" $sel={i > 0}>{r[5]}</Cell>
              </React.Fragment>
            ))}
          </Grid>
          <Selection />
          <FillHandle />
        </SheetClip>
        <VScroll>
          <ScrollBtn><CaretUp /></ScrollBtn>
          <VThumb />
          <VTrack />
          <ScrollBtn><CaretDown /></ScrollBtn>
        </VScroll>
      </SheetArea>

      <SheetBar>
        <Slot $w={10} $ml={25} $h={27}><CaretSide $left $c="#c0c0c0" /></Slot>
        <Slot $w={10} $ml={19} $h={27}><CaretSide $c="#c0c0c0" /></Slot>
        <SheetTab>Sales</SheetTab>
        <AddSheet>
          <svg width="9" height="9"><path d="M0 4.500H9M4.500 0V9" stroke="#666" strokeWidth="1.500" /></svg>
        </AddSheet>
        <SplitDots><i /><i /><i /></SplitDots>
        <ScrollBtn $ml={14} $mt={6}><CaretSide $left /></ScrollBtn>
        <HThumb />
        <ScrollBtn $ml={34} $mt={6}><CaretSide /></ScrollBtn>
      </SheetBar>

      <StatusBar>
        <StatusText $w={246} $ml={8} $j="flex-start">Ready</StatusText>
        <StatusText $w={96} $j="flex-start">Average: 17,462</StatusText>
        <StatusText $w={66} $j="flex-start">Count: 13</StatusText>
        <StatusText $w={85} $j="flex-start">Sum: 227,000</StatusText>
        <ActiveView>
          <svg width="14" height="14" fill="none" stroke="#666"><path d="M.5.500H13.500V13.500H.5ZM.5 4.800H13.500M.5 9.200H13.500M4.800.5V13.500M9.200.5V13.500" /></svg>
        </ActiveView>
        <Slot $w={14} $ml={11}>
          <svg width="14" height="14" fill="none" stroke="#666"><path d="M.5.500H13.500V13.500H.5ZM2.500 2.500H11.500V11.500H2.500ZM4 5H10M4 7H10M4 9H10" /></svg>
        </Slot>
        <Slot $w={14} $ml={24}>
          <svg width="14" height="14" fill="none" stroke="#666"><path d="M.5.500H13.500V13.500H.5ZM.5 7.500H13.500M6.500 .5V7.500" /></svg>
        </Slot>
        <Slot $w={8} $ml={16}><svg width="7" height="2"><rect width="7" height="2" fill="#666" /></svg></Slot>
        <ZoomTrack><ZoomThumb /></ZoomTrack>
        <Slot $w={8} $ml={4}>
          <svg width="7" height="7"><path d="M0 3.500H7M3.500 0V7" stroke="#666" strokeWidth="1.500" /></svg>
        </Slot>
        <StatusText $w={30} $ml={11} $j="flex-start">100%</StatusText>
      </StatusBar>

      <Menu>
        <MenuBody>
          <MenuList>
            {menuItems.map(([t, s], i) => (
              <MenuItem key={t}>
                <MenuIcon viewBox="0 0 50 44">{icons[i]}</MenuIcon>
                <MenuText><MenuTitle>{t}</MenuTitle>{s}</MenuText>
              </MenuItem>
            ))}
          </MenuList>
          <MenuScroll>
            <MenuBtn><CaretUp /></MenuBtn>
            <MenuThumb />
            <MenuTrack />
            <MenuBtnEnd><CaretDown /></MenuBtnEnd>
          </MenuScroll>
        </MenuBody>
        <MoreRow><span><u>M</u>ore Number Formats...</span></MoreRow>
      </Menu>

      <Callout $x={418} $y={12} $w={40} $h={56}>
        <CalloutShape width="40" height="56" viewBox="0 0 40 56">
          <path d="M20 .5A19.500 19.500 0 0 1 33 34.500C29 38 25 44 22 54C20 45 14 40 8 35.500A19.500 19.500 0 0 1 20 .5Z" fill={ORANGE} />
        </CalloutShape>
        <CalloutNum $left={0}>2</CalloutNum>
      </Callout>

      <Callout $x={604} $y={370} $w={45} $h={40}>
        <CalloutShape width="45" height="40" viewBox="0 0 45 40">
          <path d="M25 .5A19.500 19.500 0 1 1 11 32C8 28 5 24 .5 21C5 18 8 12 11 8A19.500 19.500 0 0 1 25 .5Z" fill={ORANGE} />
        </CalloutShape>
        <CalloutNum $left={5}>1</CalloutNum>
      </Callout>

      <Callout $x={310} $y={299} $w={60} $h={40}>
        <CalloutShape width="60" height="40" viewBox="0 0 60 40">
          <path d="M20 .5A19.500 19.500 0 0 1 34 6C40 12 48 18 57 21C48 23 40 28 34 34A19.500 19.500 0 1 1 20 .5Z" fill={ORANGE} />
        </CalloutShape>
        <CalloutNum $left={0}>3</CalloutNum>
      </Callout>
    </Frame>
  );
}
